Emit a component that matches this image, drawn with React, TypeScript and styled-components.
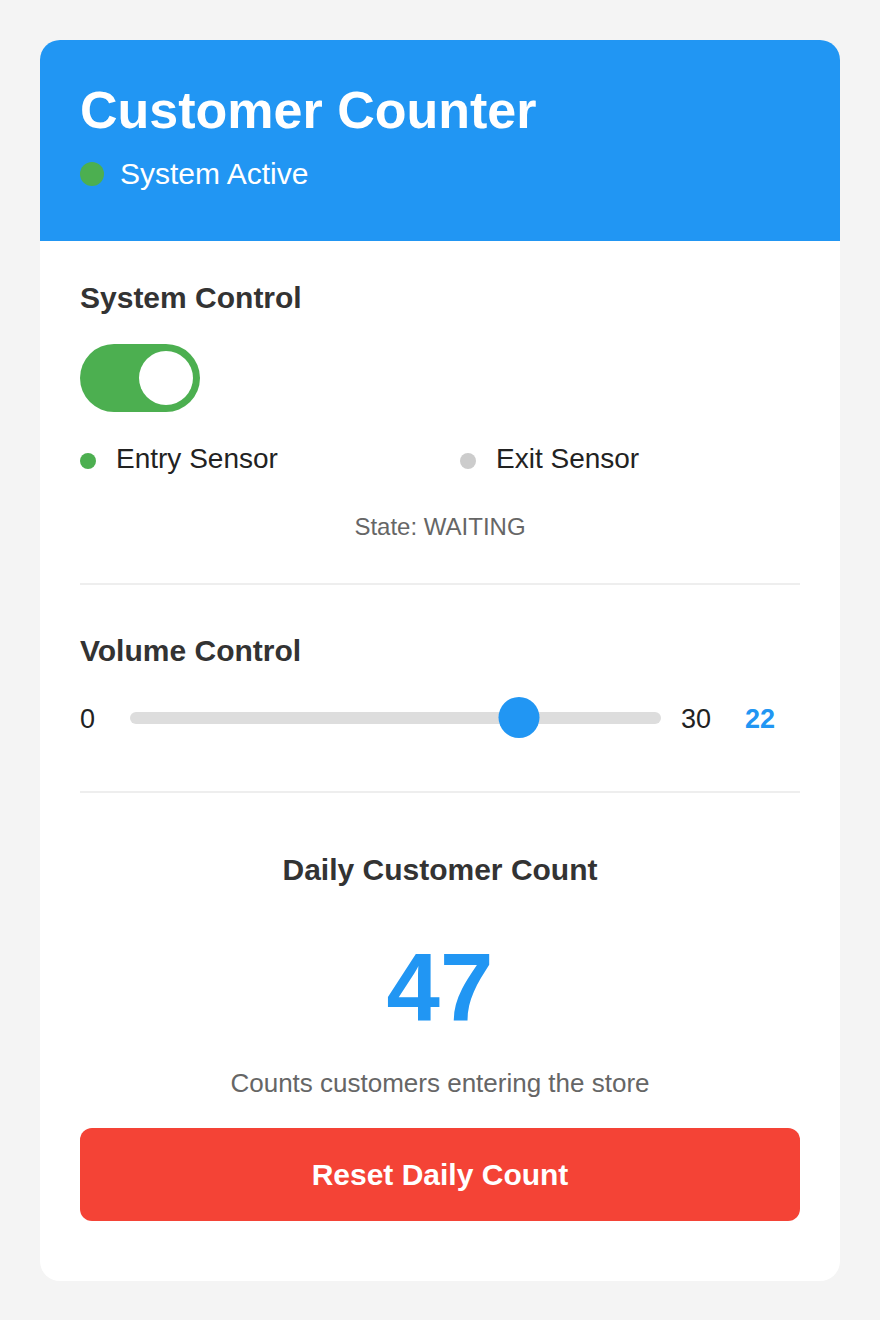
import * as React from 'react'
import styled, { createGlobalStyle } from 'styled-components'

const GlobalStyle = createGlobalStyle`
  html, body {
    margin: 0;
    padding: 0;
    background: #f4f4f4;
    font-family: "Liberation Sans", Arial, sans-serif;
  }
  * {
    box-sizing: border-box;
  }
`

const Page = styled.div`
  padding: 40px;
`

const Card = styled.div`
  width: 800px;
  background: #fff;
  border-radius: 20px;
  overflow: hidden;
`

const Header = styled.header`
  background: #2196f3;
  color: #fff;
  padding: 40px 40px 50px;
`

const Title = styled.h1`
  margin: 0 0 17px;
  font-size: 52px;
  font-weight: bold;
  line-height: normal;
`

const StatusRow = styled.div`
  display: flex;
  align-items: center;
  gap: 16px;
  font-size: 30px;
  height: 34px;
`

const Dot = styled.span<{ $size: number; $color: string }>`
  flex: none;
  width: ${p => p.$size}px;
  height: ${p => p.$size}px;
  border-radius: 50%;
  background: ${p => p.$color};
`

const Body = styled.div`
  padding: 40px 40px 60px;
`

const Section = styled.section<{ $last?: boolean }>`
  padding-bottom: ${p => (p.$last ? 0 : 42)}px;
  border-bottom: ${p => (p.$last ? 'none' : '2px solid #eee')};
  margin-bottom: ${p => (p.$last ? 0 : 49)}px;
`

const Heading = styled.h2<{ $center?: boolean }>`
  margin: 0 0 29px;
  font-size: 30px;
  font-weight: bold;
  color: #333;
  line-height: normal;
  text-align: ${p => (p.$center ? 'center' : 'left')};
`

const Switch = styled.div<{ $on: boolean }>`
  position: relative;
  width: 120px;
  height: 68px;
  border-radius: 34px;
  background: ${p => (p.$on ? '#4caf50' : '#ccc')};
`

const Knob = styled.span<{ $on: boolean }>`
  position: absolute;
  top: 7px;
  left: ${p => (p.$on ? 59 : 7)}px;
  width: 54px;
  height: 54px;
  border-radius: 50%;
  background: #fff;
`

const SensorGrid = styled.div`
  display: grid;
  grid-template-columns: 1fr 1fr;
  column-gap: 40px;
  margin-top: 31px;
`

const Sensor = styled.div`
  display: flex;
  align-items: center;
  gap: 20px;
  font-size: 28px;
  color: #222;
  line-height: normal;
  & > span:first-child {
    margin-top: 4px;
  }
`

const StateText = styled.div`
  margin-top: 38px;
  text-align: center;
  font-size: 24px;
  color: #666;
`

const SliderRow = styled.div`
  display: flex;
  align-items: center;
  gap: 20px;
  padding-right: 11px;
  margin: 1px 0 11px;
  font-size: 27px;
  color: #222;
`

const RangeLabel = styled.span`
  width: 30px;
  flex: none;
  padding-top: 3px;
`

const TrackArea = styled.div`
  position: relative;
  flex: 1;
  height: 41px;
  display: flex;
  align-items: center;
`

const Track = styled.div`
  width: 100%;
  height: 12px;
  border-radius: 6px;
  background: #ddd;
`

const Thumb = styled.span`
  position: absolute;
  top: 0;
  width: 41px;
  height: 41px;
  border-radius: 50%;
  background: #2196f3;
  transform: translateX(-50%);
`

const VolumeValue = styled.span`
  width: 58px;
  flex: none;
  padding-top: 3px;
  text-align: center;
  font-weight: bold;
  color: #2196f3;
`

const CountSection = styled.div`
  padding-top: 11px;
  text-align: center;
`

const CountNumber = styled.div`
  margin-top: 46px;
  font-size: 96px;
  font-weight: bold;
  color: #2196f3;
  line-height: normal;
`

const CountNote = styled.p`
  margin: 25px 0 29px;
  font-size: 26px;
  color: #666;
  line-height: normal;
`

const ResetButton = styled.button`
  display: block;
  width: 100%;
  height: 93px;
  padding: 0;
  border: none;
  border-radius: 12px;
  background: #f44336;
  color: #fff;
  font-family: inherit;
  font-size: 30px;
  font-weight: bold;
  line-height: normal;
  cursor: pointer;
`

const App = () => {
  const [active, setActive] = React.useState(true)
  const [count, setCount] = React.useState(47)
  const volume = 22
  const maxVolume = 30

  return (
    <Page>
      <GlobalStyle />
      <Card>
        <Header>
          <Title>Customer Counter</Title>
          <StatusRow>
            <Dot $size={24} $color={active ? '#4caf50' : '#ccc'} />
            <span>{active ? 'System Active' : 'System Inactive'}</span>
          </StatusRow>
        </Header>
        <Body>
          <Section>
            <Heading>System Control</Heading>
            <Switch $on={active} onClick={() => setActive(!active)}>
              <Knob $on={active} />
            </Switch>
            <SensorGrid>
              <Sensor>
                <Dot $size={16} $color="#4caf50" />
                <span>Entry Sensor</span>
              </Sensor>
              <Sensor>
                <Dot $size={16} $color="#ccc" />
                <span>Exit Sensor</span>
              </Sensor>
            </SensorGrid>
            <StateText>State: WAITING</StateText>
          </Section>
          <Section>
            <Heading>Volume Control</Heading>
            <SliderRow>
              <RangeLabel>0</RangeLabel>
              <TrackArea>
                <Track />
                <Thumb style={{ left: `${(volume / maxVolume) * 100}%` }} />
              </TrackArea>
              <RangeLabel>{maxVolume}</RangeLabel>
              <VolumeValue>{volume}</VolumeValue>
            </SliderRow>
          </Section>
          <Section $last>
            <CountSection>
              <Heading $center>Daily Customer Count</Heading>
              <CountNumber>{count}</CountNumber>
              <CountNote>Counts customers entering the store</CountNote>
              <ResetButton onClick={() => setCount(0)}>Reset Daily Count</ResetButton>
            </CountSection>
          </Section>
        </Body>
      </Card>
    </Page>
  )
}

export default App
